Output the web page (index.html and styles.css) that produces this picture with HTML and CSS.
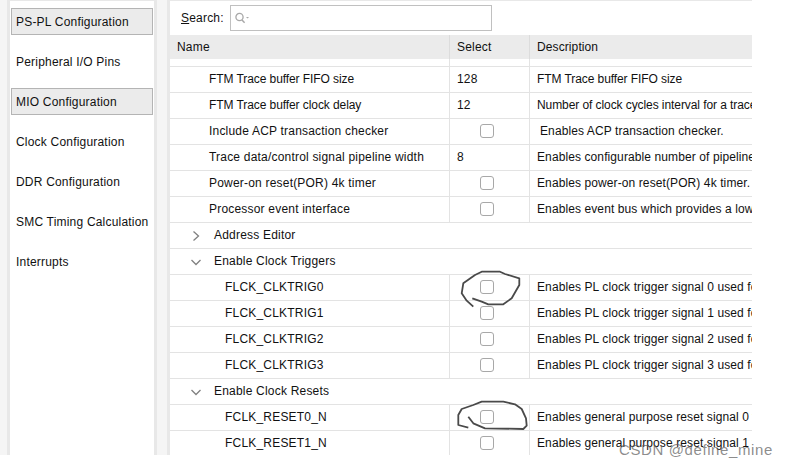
FILE: index.html
```html
<!DOCTYPE html>
<html lang="en">
<head>
<meta charset="utf-8">
<title>Zynq Block Design</title>
<link rel="stylesheet" href="styles.css">
</head>
<body>
<div class="app">
  <nav class="side">
    <div class="nav-item on">PS-PL Configuration</div>
    <div class="nav-item">Peripheral I/O Pins</div>
    <div class="nav-item on">MIO Configuration</div>
    <div class="nav-item">Clock Configuration</div>
    <div class="nav-item">DDR Configuration</div>
    <div class="nav-item">SMC Timing Calculation</div>
    <div class="nav-item">Interrupts</div>
  </nav>
  <main class="main">
    <div class="search">
      <label class="search-label"><u>S</u>earch:</label>
      <div class="search-box">
        <svg width="16" height="14" viewBox="0 0 16 14"><circle cx="5.5" cy="6" r="3.6" fill="none" stroke="#a8a8a8" stroke-width="1.3"/><path d="M8 9l2.6 2.8" stroke="#a8a8a8" stroke-width="1.5" fill="none"/><path d="M12 6h3l-1.500 1.500z" fill="#a8a8a8"/></svg>
      </div>
    </div>
    <div class="row head"><div class="c name">Name</div><div class="c sel">Select</div><div class="c desc">Description</div></div>
    <div class="row stub"><div class="c"></div><div class="c"></div><div class="c"></div></div>
    <div class="row"><div class="c name l1 tight">FTM Trace buffer FIFO size</div><div class="c sel">128</div><div class="c desc tight">FTM Trace buffer FIFO size</div></div>
    <div class="row"><div class="c name l1 tight">FTM Trace buffer clock delay</div><div class="c sel">12</div><div class="c desc tight">Number of clock cycles interval for a trace packet</div></div>
    <div class="row"><div class="c name l1">Include ACP transaction checker</div><div class="c sel"><span class="check"></span></div><div class="c desc lead">Enables ACP transaction checker.</div></div>
    <div class="row"><div class="c name l1">Trace data/control signal pipeline width</div><div class="c sel">8</div><div class="c desc">Enables configurable number of pipeline stages</div></div>
    <div class="row"><div class="c name l1">Power-on reset(POR) 4k timer</div><div class="c sel"><span class="check"></span></div><div class="c desc">Enables power-on reset(POR) 4k timer.</div></div>
    <div class="row"><div class="c name l1">Processor event interface</div><div class="c sel"><span class="check"></span></div><div class="c desc">Enables event bus which provides a low latency</div></div>
    <div class="row group"><div class="c name l0"><svg class="chev" width="12" height="12" viewBox="0 0 12 12"><path d="M3.500 1.500l5 4.500-5 4.500" fill="none" stroke="#808080" stroke-width="1.300"/></svg>Address Editor</div></div>
    <div class="row group"><div class="c name l0"><svg class="chev" width="12" height="12" viewBox="0 0 12 12"><path d="M1.500 4l4.500 4.500 4.500-4.500" fill="none" stroke="#808080" stroke-width="1.300"/></svg>Enable Clock Triggers</div></div>
    <div class="row"><div class="c name l2">FLCK_CLKTRIG0</div><div class="c sel"><span class="check"></span></div><div class="c desc">Enables PL clock trigger signal 0 used for</div></div>
    <div class="row"><div class="c name l2">FLCK_CLKTRIG1</div><div class="c sel"><span class="check"></span></div><div class="c desc">Enables PL clock trigger signal 1 used for</div></div>
    <div class="row"><div class="c name l2">FLCK_CLKTRIG2</div><div class="c sel"><span class="check"></span></div><div class="c desc">Enables PL clock trigger signal 2 used for</div></div>
    <div class="row"><div class="c name l2">FLCK_CLKTRIG3</div><div class="c sel"><span class="check"></span></div><div class="c desc">Enables PL clock trigger signal 3 used for</div></div>
    <div class="row group"><div class="c name l0"><svg class="chev" width="12" height="12" viewBox="0 0 12 12"><path d="M1.500 4l4.500 4.500 4.500-4.500" fill="none" stroke="#808080" stroke-width="1.300"/></svg>Enable Clock Resets</div></div>
    <div class="row"><div class="c name l2">FCLK_RESET0_N</div><div class="c sel"><span class="check"></span></div><div class="c desc">Enables general purpose reset signal 0 for</div></div>
    <div class="row"><div class="c name l2">FCLK_RESET1_N</div><div class="c sel"><span class="check"></span></div><div class="c desc">Enables general purpose reset signal 1 for</div></div>
  </main>
</div>
<svg class="ink" width="787" height="467" viewBox="0 0 787 467">
  <path d="M472.300 298.300L481.700 301.700L488.300 304.300L503.300 304.300L511.700 298.300L519.300 285L519.300 278.300L505 274L500 271.700L481.700 271.700L475 275L463.300 283.300L461.700 293.300L466.700 300.700L473.300 306.700"/>
  <path d="M468.300 416.700L473.300 423.300L485 428.300L523.300 429L526.700 425.700L526 418.300L521.700 409L515 404.300L503.300 401.700L481.700 401.700L473.300 405L461.700 409L458.300 415L458.300 425L468.300 427.700"/>
</svg>
<div class="mark">CSDN @define_mine</div>
</body>
</html>
```
FILE: styles.css
```css
html, body {
  margin: 0;
  padding: 0;
  background: #fff;
  width: 787px;
  height: 467px;
  overflow: hidden;
}
body {
  position: relative;
  font-family: "Liberation Sans", Arial, sans-serif;
  font-size: 12px;
  color: #111;
}
.app {
  display: flex;
  width: 752px;
  height: 455px;
  box-sizing: border-box;
  padding-left: 7px;
  background: #f5f5f5;
}
.side {
  width: 142px;
  flex: none;
  background: #fff;
  border-left: 3px solid #e8e8e8;
  border-right: 3px solid #e8e8e8;
  border-top: 1px solid #e8e8e8;
  padding: 7px 1px 0;
  margin-right: 10px;
}
.nav-item {
  height: 27px;
  line-height: 26px;
  margin-bottom: 13px;
  padding-left: 4px;
  border: 1px solid transparent;
  box-sizing: border-box;
  letter-spacing: 0.2px;
  white-space: nowrap;
}
.nav-item.on {
  background: #ebebeb;
  border-color: #b4b4b4;
}
.main {
  flex: 1;
  min-width: 0;
  background: #fff;
  border-left: 3px solid #e8e8e8;
  border-top: 1px solid #e8e8e8;
  overflow: hidden;
}
.search {
  display: flex;
  align-items: center;
  height: 34px;
  padding-left: 11px;
  box-sizing: border-box;
}
.search-label {
  width: 49px;
  letter-spacing: 0.2px;
}
.search-box {
  width: 262px;
  height: 26px;
  box-sizing: border-box;
  border: 1px solid #c0c0c0;
  display: flex;
  align-items: center;
  padding-left: 3px;
}
.row {
  display: grid;
  grid-template-columns: 280px 80px 222px;
  height: 26px;
  border-bottom: 1px solid #e3e3e3;
  box-sizing: border-box;
}
.c {
  border-right: 1px solid #e3e3e3;
  line-height: 25px;
  white-space: nowrap;
  overflow: hidden;
  letter-spacing: 0.2px;
}
.row .c:last-child {
  border-right: 0;
}
.row.group {
  display: block;
}
.head {
  height: 24px;
  background: #ebebeb;
  border-bottom: 0;
}
.head .c {
  line-height: 24px;
  border-right-color: #dcdcdc;
}
.stub {
  height: 8px;
}
.name { padding-left: 7px; }
.name.l1 { padding-left: 39px; }
.name.l0 { padding-left: 20px; display: flex; align-items: center; height: 25px; }
.name.l2 { padding-left: 55px; }
.chev { margin-right: 12px; flex: none; }
.sel { padding-left: 7px; }
.desc { padding-left: 7px; letter-spacing: 0.1px; }
.desc.lead { padding-left: 10px; }
.c.tight { letter-spacing: -0.08px; }
.check {
  display: block;
  width: 14px;
  height: 14px;
  margin: 5px 0 0 23px;
  box-sizing: border-box;
  border: 1.5px solid #a8a8a8;
  border-radius: 3px;
  background: #fff;
}
.ink {
  position: absolute;
  left: 0;
  top: 0;
  pointer-events: none;
}
.ink path {
  fill: none;
  stroke: #4a4a4a;
  stroke-width: 1.8;
  stroke-linejoin: round;
}
.mark {
  position: absolute;
  left: 619px;
  top: 441px;
  font-size: 15px;
  line-height: 18px;
  color: rgba(90, 90, 90, 0.7);
  letter-spacing: 0.6px;
  white-space: nowrap;
}
```
